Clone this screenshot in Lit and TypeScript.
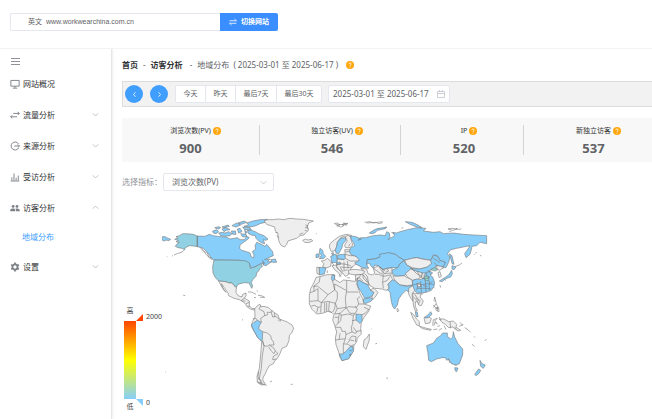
import { LitElement, html, svg, css } from "lit";
import { customElement } from "lit/decorators.js";

/* ---------- icons ---------- */

const icons = {
  monitor: svg`<path d="M1.2 2h11.6v8H1.2zM7 10v2.4M4 12.8h6"/>`,
  swap: svg`<path d="M1 9.5h9M3.2 7.3 1 9.5l2.2 2.2M4.500 4.800H13M10.800 2.600 13 4.800 10.800 7"/>`,
  source: svg`<path d="M12 4.200A5.600 5.600 0 1 0 12 9.800M6 7h7.200M11 4.800 13.200 7 11 9.200"/>`,
  bars: svg`<path d="M1 12.600h12M2.600 12V7.500M5.600 12V2M8.600 12V8M11.600 12V5"/>`,
  people: svg`<g fill="currentColor" stroke="none"><circle cx="4.4" cy="4.8" r="2"/><circle cx="9.8" cy="4.8" r="2"/><path d="M.4 11.6V9.8C.4 8.2 3 7.6 4.4 7.6s3 .5 3 2.2v1.8zM8.4 11.6V9.4c0-.8-.3-1.3-.8-1.7 2.4-.4 6 .2 6 2.1v1.8z"/></g>`,
  gear: svg`<circle cx="7" cy="7" r="3.6" stroke-width="2.6"/><path stroke-width="2.4" d="M7 .8v2M7 11.2v2M1.6 3.9l1.8 1M10.6 9.1l1.8 1M1.6 10.1l1.8-1M10.6 4.9l1.8-1"/>`,
};

type IconName = keyof typeof icons;

/* ---------- map data, three units to a pixel ---------- */

const PLAIN = "#eeeeee";
const BLUE = "#87cefa";
const TEAL = "#90d1e4";
const GREEN = "#90d2c8";

interface Shape {
  fill: string;
  d: string;
}
interface Sheet {
  dx: number;
  dy: number;
  shapes: Shape[];
}

const s = (fill: string, d: string): Shape => ({ fill, d });

const sheets: Sheet[] = [
  {
    dx: 0,
    dy: 0,
    shapes: [
      s(BLUE, "M37 95 45 95 52 99 62 103 56 107 48 105 44 108 37 106Z"),
      s(TEAL, "M142 93 130 88 110 86 98 86 88 92 78 95 84 99 74 103 86 106 78 110 88 113 80 118 76 124 84 128 96 130 104 134 106 128 118 122 130 123 142 125Z"),
      s("none", "M104 134 96 141 82 146 72 150M66 153 69 152M50 154 52 155M101 270 104 272 103 273Z"),
      s(BLUE, "M142 93 165 94 178 88 190 92 210 95 228 96 240 102 262 98 270 104 283 104 290 94 298 98 292 104 283 110 270 120 269 130 275 136 290 140 300 144 304 156 311 158 312 150 307 140 317 132 315 122 320 112 334 118 345 124 350 118 360 130 368 140 370 152 356 158 344 164 360 162 352 170 366 170 356 176 348 182 340 180 342 174 330 178 318 184 304 190 300 182 298 176 288 172 270 166 192 165 186 162 178 150 168 138 160 130 150 127 142 125Z"),
      s("none", "M150 127 158 136 164 142 168 148 178 158 186 164M156 130 162 140 170 143M172 144 176 156 184 158M142 93V125M338 170 346 176M340 180 338 166"),
      s(TEAL, "M192 165 270 166 288 168 298 174 301 190 318 184 332 176 338 184 330 190 326 198 320 204 318 214 308 224 304 232 308 244 305 250 300 240 298 234 284 233 270 236 262 240 259 248 252 242 246 234 238 234 226 230 206 228 196 218 189 204 188 186Z"),
      s(BLUE, "M292 76 304 76 316 80 326 86 342 92 354 102 348 106 340 104 344 116 336 114 326 108 318 100 316 92 304 90 296 86Z"),
      s(BLUE, "M206 84 216 82 226 84 236 80 246 86 240 92 226 94 212 92Z"),
      s(BLUE, "M188 78 200 74 206 80 198 86 190 84Z"),
      s(BLUE, "M290 54 308 48 330 44 352 43 346 52 330 56 318 62 300 66 282 64 296 60Z"),
      s(BLUE, "M194 68 206 65 212 68 204 72ZM216 72 228 68 240 74 228 76 222 80ZM246 62 260 54 272 60 258 66ZM262 72 270 70 276 80 266 84ZM278 66 300 68 304 74 284 74ZM244 78 256 78 258 88 248 88ZM272 86 288 88 290 94 278 96ZM216 66 234 60 238 64 224 68ZM264 54 282 48 290 52 274 58ZM284 76 292 82 286 86Z"),
      s(BLUE, "M362 164 376 162 380 172 368 172Z"),
      s(PLAIN, "M342 48 352 44 368 44 385 42 400 44 420 40 440 42 460 43 490 48 476 54 472 66 476 76 466 84 462 90 450 92 440 100 426 104 414 108 410 118 404 126 394 122 388 112 384 98 384 86 376 78 374 66 362 62 350 58Z"),
      s("none", "M466 60 474 62 466 68 476 70M464 76 472 78M448 88 460 84M376 82 384 84M380 92 388 98"),
      s(PLAIN, "M458 106 466 102 474 105 484 103 488 108 476 113 464 112Z"),
      s(PLAIN, "M206 228 226 230 238 234 246 234 252 242 259 248 258 262 264 272 276 276 278 268 288 264 288 272 284 278 278 290 268 284 252 280 236 272 234 264 224 250 214 236 218 248 228 262 222 256 212 240Z"),
      s(PLAIN, "M274 286 284 280 298 288 298 302 305 310 314 311 313 315 303 313 292 306 285 295Z"),
      s("none", "M278 288 286 288M288 296 298 292M292 304 300 304M294 261 304 261 318 268M324 271 334 272 344 277 330 277M312 277 318 278M320 256 324 260M276 344 279 345M45 500 47 501M499 86 501 86"),
      s(BLUE, "M510 130 518 136 520 146 527 154 522 160 508 161 514 151 508 142Z"),
      s(BLUE, "M498 148 508 146 507 156 498 158Z"),
      s(PLAIN, "M314 312 322 302 330 298 333 305 342 304 356 308 362 314 372 322 384 330 388 342 398 346 410 350 426 360 431 370 426 382 418 392 417 406 410 424 396 430 390 446 382 460 374 468 370 476 358 482 350 496 346 506 340 516 338 524 346 538 334 540 322 532 321 514 328 490 332 450 335 410 322 396 312 378 304 364 307 350 315 336Z"),
      s(BLUE, "M304 360 312 352 322 346 334 352 328 362 326 372 338 380 337 404 334 408 322 396 312 378Z"),
      s("none", "M332 302 327 312 342 320 344 332 332 340 334 352M344 332 352 330 352 322 364 322 366 316M364 322 368 336 378 334 386 342M374 324V336M308 342 318 340 322 346M338 380 352 384 362 392 364 402 370 410 372 420 358 420 352 424 342 422 338 406M358 420 372 430 376 438 372 446 364 438 356 426M376 438 384 446 370 454 368 464 380 462M337 408 342 424 337 450 334 490 328 520 334 536M326 500 324 516 330 524M322 530 338 538 350 541M324 520 336 530M326 534 340 534M384 346 392 344 390 350M360 531 366 528M422 538 428 538"),
    ],
  },
  {
    dx: 510,
    dy: 0,
    shapes: [
      s(PLAIN, "M28 126 30 116 44 104 58 94 78 88 94 91 90 98 74 94 62 98 52 112 50 126 46 136 34 140Z"),
      s(BLUE, "M50 124 52 112 62 100 76 98 78 106 68 118 66 128 62 136 56 146 48 144 46 134Z"),
      s(PLAIN, "M76 96 84 90 92 98 98 120 90 128 76 128 74 120 82 108Z"),
      s(PLAIN, "M4 168 14 166 22 160 34 170 32 184 18 189 8 186 12 176Z"),
      s(BLUE, "M-3 187 18 189 13 207-2 210Z"),
      s(PLAIN, "M-10 187-3 187-2 208-9 206Z"),
      s(PLAIN, "M76 148 74 134 90 134 98 142 106 154 124 160 124 172 104 180 96 186 90 196 84 210 76 214 68 204 56 192 50 184 50 172 52 162 72 164Z"),
      s(BLUE, "M32 154 48 147 52 162 50 172 36 173ZM52 150 74 147 76 160 72 164 52 160ZM50 174 60 171 62 178 50 178ZM34 146 40 142 40 150Z"),
      s(PLAIN, "M36 182 50 180 50 188 62 200 66 206 60 212 56 204 44 194Z"),
      s(PLAIN, "M84 196 102 193 122 195 134 198 134 207 110 210 88 207Z"),
      s("none", "M76 140H98M76 148 90 152 104 152M76 160 90 168 120 168M50 180 62 176 78 178 92 182M64 186 82 188 98 186M70 198 82 194M72 170V196M82 168 84 190M60 184 68 200M22 204 22 196M56 213 64 214M82 218 90 219M34 172 42 180M90 116 86 124"),
      s(BLUE, "M88 140 92 128 104 122 100 112 94 104 92 92 110 96 124 102 114 106 122 98 136 98 160 92 180 90 196 92 200 80 208 84 210 98 204 104 214 98 224 92 218 82 230 84 240 80 262 74 290 68 318 70 310 78 340 82 360 80 370 86 400 84 430 88 460 90 500 92 500 116 480 112 470 122 456 124 454 134 450 148 438 158 434 146 444 132 450 122 430 126 410 130 392 134 382 146 390 156 386 172 378 188 368 186 376 172 360 166 352 152 340 150 332 166 310 162 290 158 276 160 254 166 236 156 226 148 206 144 188 150 180 156 164 162 142 164 140 178 146 190 128 188 112 180 104 174 118 166 108 154 94 150Z"),
      s(BLUE, "M142 164 164 162 180 156 178 148 206 143 226 148 236 156 254 166 246 172 238 178 234 188 216 188 200 190 188 194 176 182 164 180 160 190 152 182 148 174 140 178Z"),
      s(PLAIN, "M160 190 176 182 188 194 216 188 216 204 212 210 218 224 204 238 208 250 200 256 186 252 164 250 150 242 138 224 128 208 134 200 122 190 140 192 144 206 158 210 164 204Z"),
      s("none", "M160 190 180 204 190 208M188 194 192 206 214 204M164 208 176 208 190 214 212 210M190 208 188 232 190 250M188 232 202 226 210 214M134 206 142 214 146 236M176 184 190 204M200 190 206 198 196 202M180 186 196 198"),
      s(PLAIN, "M106 210 128 208 138 220 148 240 132 234 118 226 108 234Z"),
      s("none", "M106 224 118 218 122 208M118 218 128 228M128 208 130 220 142 232"),
      s(BLUE, "M110 230 118 226 132 234 144 240 150 254 162 262 158 272 146 278 134 280 124 262 114 246Z"),
      s(BLUE, "M130 282 150 278 158 280 154 288 136 296 130 291Z"),
      s(PLAIN, "M150 254 162 250 166 254 174 262 166 276 158 284 156 274 162 262Z"),
      s(PLAIN, "M254 166 276 160 290 158 310 163 332 166 336 176 322 186 300 192 276 188 260 180Z"),
      s(BLUE, "M216 196 234 187 240 176 252 167 260 180 274 188 272 194 264 204 252 212 230 214 218 208Z"),
      s(PLAIN, "M218 212 230 214 252 212 258 216 276 224 278 240 262 242 240 240 226 228Z"),
      s(PLAIN, "M256 206 272 192 292 198 300 206 300 218 292 224 278 226 262 216Z"),
      s(BLUE, "M272 190 300 192 322 186 334 176 332 166 342 150 352 154 360 166 376 172 372 182 362 186 350 180 344 190 330 196 320 204 306 204 292 200Z"),
      s(PLAIN, "M348 182 362 184 372 188 358 196 350 191Z"),
      s(GREEN, "M332 193 344 188 354 193 346 198 338 196Z"),
      s(PLAIN, "M354 202 360 200 364 214 358 218 355 210Z"),
      s(BLUE, "M278 226 290 222 304 224 314 216 314 206 330 198 338 204 330 210 338 216 344 232 342 244 334 256 318 262 304 264 292 264 282 256 278 244Z"),
      s(GREEN, "M314 214 326 213 326 228 314 226Z"),
      s(PLAIN, "M292 198 306 204 304 218 298 212ZM290 236 300 234 304 244 294 246Z"),
      s("none", "M280 240 292 236 304 240 318 236 342 238M292 250 306 250 322 250 334 252M302 228 304 262M316 228 318 262M328 228 328 256M300 218 316 222 330 216M308 204 310 222M320 204V214M324 196 334 208M342 172 350 180M340 160 360 172M274 190 290 206 306 214M330 236 338 228M294 236 290 256M310 242 322 244"),
      s(BLUE, "M208 250 204 238 218 224 226 228 240 240 262 244 278 240 270 250 268 262 258 256 246 268 236 282 232 300 224 312 218 304 214 290 210 262 202 254Z"),
      s(PLAIN, "M266 250 278 242 284 256 276 268 280 290 274 282 266 268Z"),
      s(PLAIN, "M278 264 292 266 304 266 300 276 310 288 304 302 296 300 292 290 286 290 286 304 292 318 286 318 280 300Z"),
      s("none", "M284 268 292 280 302 288M288 278 298 290 296 298M280 276 294 290M232 310 236 316 233 321 231 316ZM304 268 310 266M340 246 344 250M344 276 348 292 342 286ZM348 294 352 304M340 300 350 312 354 304M346 314 356 308 357 320 348 316"),
      s(BLUE, "M396 182 408 186 402 194 396 192ZM395 196 397 206 392 216 376 222 366 230 358 228 374 218 386 210Z"),
      s(BLUE, "M388 146 396 152 402 178 396 176 392 160Z"),
      s("none", "M406 184 418 180 426 174M372 222 378 226M360 240 362 248M462 150 464 148M480 152 484 152M466 144 470 142"),
      s(BLUE, "M156 86 148 84 160 76 174 70 200 67 196 71 172 76 164 84ZM256 50 276 52 294 60 306 68 290 66 270 58Z"),
      s("none", "M42 56 52 54 60 60 50 62 62 66 72 62 66 58 84 56 70 54 80 60 56 58 46 58M134 52 150 50 160 54 172 52 188 50M140 54 168 52 176 56 188 53M196 66 200 66M384 72 396 70 412 72 398 76ZM388 80 394 78M408 70 416 73 424 72M244 70 250 68M214 82 222 86"),
      s(BLUE, "M34 210 42 209 42 222 46 226 40 230 36 222Z"),
    ],
  },
  {
    dx: 450,
    dy: 75,
    shapes: [
      s(PLAIN, "M48 142 60 140 80 134 94 134 104 135 104 148 120 158 130 150 150 152 164 154 170 152 174 142 170 162 180 190 188 206 192 222 212 228 206 244 192 262 184 276 182 296 184 312 172 324 170 336 162 346 160 362 146 386 126 392 120 382 116 366 108 344 106 324 110 306 104 286 98 270 102 254 96 248 84 244 66 250 50 252 36 238 28 222 28 196 32 176 42 158Z"),
      s(BLUE, "M96 136 104 135 103 148 98 154 94 146Z"),
      s(BLUE, "M168 252 186 254 186 274 180 280 168 270Z"),
      s(BLUE, "M118 372 128 372 138 364 150 350 158 349 160 364 146 386 126 392Z"),
      s("none", "M148 374 152 372 151 378ZM40 170 52 168 84 194 104 180M60 140 58 156 42 168 42 184 30 188M42 184 54 176 54 212 30 214M98 154 104 180 104 162 140 182 140 152M140 186H174M104 180 112 186 112 206 106 220 84 214 64 218 84 194M140 182 136 206 138 232 112 236 106 220M54 212 64 218 62 248M34 228 44 226 54 232 50 248M54 232 62 230M74 218V246M80 218V244M88 216 86 242 96 248M106 220 104 236 98 246M112 236 104 252 120 250 138 234 146 230 170 232 176 222 172 206 180 200M138 232 150 250 166 250 172 238 166 228M120 250 124 256 144 252 158 256 166 252M186 254 196 250 206 238 192 232M176 222 192 222M104 262 116 262 118 250M124 254 122 272 106 288M116 262 114 280M106 292 122 292 126 304 136 304 138 314 146 310 156 306 154 292 158 280 160 256M156 272 168 270M160 292 168 304 184 302M156 306 168 310 172 304M138 314 136 326 106 330M136 326 130 344 130 370M130 342 142 342 152 348 162 344M146 330 156 318 168 320 166 336M142 340 150 330 162 332M120 310 118 328M148 362 156 362"),
      s(PLAIN, "M192 330 200 324 208 312 208 330 198 358 190 350Z"),
      s("none", "M228 340 231 341M262 444 264 445M214 296 216 298"),
    ],
  },
  {
    dx: 510,
    dy: 270,
    shapes: [
      s(BLUE, "M286 50 292 52 294 66 288 64Z"),
      s(PLAIN, "M272 52 280 58 290 72 298 80 298 92 290 90 280 72Z"),
      s(PLAIN, "M298 94 310 97 320 100 334 103 332 106 308 101Z"),
      s(PLAIN, "M312 68 326 66 334 70 330 84 316 86Z"),
      s(BLUE, "M314 66 324 60 332 50 336 58 324 68 316 69Z"),
      s(PLAIN, "M358 72 372 72 386 80 400 78 410 88 408 96 422 106 414 108 398 96 386 98 376 88 366 82Z"),
      s("none", "M338 92 340 74 352 70 344 78 352 86 344 82 342 92M358 66 362 76M340 104 352 102M356 106 366 100M372 92 378 104M390 80 392 100M404 96 410 104M418 94 430 88M420 82 428 92M434 98 444 104 452 112M462 124 466 128M456 148 464 154M494 138 500 132M352 94 360 92M340 38 348 26M346 40 354 36 352 48"),
      s(BLUE, "M320 152 340 144 350 130 362 122 368 114 382 114 382 124 392 132 398 126 400 110 404 126 414 146 428 162 428 180 418 206 408 210 394 206 386 192 380 196 376 188 366 188 350 192 334 200 326 196 324 176Z"),
      s(BLUE, "M404 218 414 219 410 230 406 228Z"),
      s(BLUE, "M480 196 486 206 496 210 490 220 482 214ZM476 222 482 226 478 234 468 242 464 238Z"),
      s("none", "M384 190 390 204M404 210 410 212M199 249 203 250M166 146 168 147"),
    ],
  },
];

/* ---------- shared ---------- */

const base = css`
  :host {
    display: block;
    font-family: "Noto Sans", "Noto Sans CJK SC", sans-serif;
    font-size: 8px;
    line-height: 12px;
    color: #606266;
  }
  * {
    box-sizing: border-box;
  }
  button,
  input,
  select {
    font: inherit;
    color: inherit;
    margin: 0;
    padding: 0;
    border: 0;
    background: none;
    outline: none;
  }
  a {
    color: inherit;
    text-decoration: none;
  }
  svg {
    display: block;
    flex: none;
  }
`;

const chevron = (d: string) => html`<svg width="7" height="7" viewBox="0 0 14 14" fill="none" stroke="currentColor" stroke-width="1.6" aria-hidden="true"><path d=${d} /></svg>`;
const DOWN = "M1.5 4.5 7 10l5.5-5.5";
const UP = "M1.5 9.5 7 4l5.5 5.5";

@customElement("help-dot")
class HelpDot extends LitElement {
  static styles = css`
    :host {
      display: block;
      flex: none;
    }
    svg {
      display: block;
    }
  `;
  render() {
    return html`<svg width="8" height="8" viewBox="0 0 16 16" aria-hidden="true">
      <circle cx="8" cy="8" r="8" fill="#ffa60d" />
      <path d="M5.6 6.2c0-3 4.8-3 4.8-.2 0 1.8-2.4 1.9-2.4 3.7" fill="none" stroke="#fff" stroke-width="1.5" />
      <circle cx="8" cy="12" r="1" fill="#fff" />
    </svg>`;
  }
}

/* ---------- header ---------- */

@customElement("site-bar")
class SiteBar extends LitElement {
  static styles = [
    base,
    css`
      .bar {
        display: flex;
        padding: 13px 10px 17px;
        border-bottom: 1px solid #f4f4f5;
      }
      .site {
        display: flex;
        align-items: center;
        gap: 4px;
        width: 210px;
        height: 18px;
        padding-left: 17px;
        border: 1px solid #e4e7ed;
        border-right: 0;
        border-radius: 2px 0 0 2px;
        font-size: 7px;
      }
      .site input {
        flex: 1;
        min-width: 0;
        font-family: "Liberation Sans", sans-serif;
      }
      .switch {
        display: flex;
        align-items: center;
        justify-content: center;
        gap: 4px;
        width: 58px;
        height: 18px;
        border-radius: 0 2px 2px 0;
        background: #3a8eff;
        color: #fff;
        font-size: 7px;
        font-weight: 700;
      }
    `,
  ];
  render() {
    return html`<header class="bar">
      <label class="site"><span>英文</span><input type="text" value="www.workwearchina.com.cn" /></label>
      <button class="switch">
        <svg width="8" height="8" viewBox="0 0 16 16" fill="none" stroke="currentColor" stroke-width="1.6" aria-hidden="true"><path d="M1 5.5h14l-4-3.500M15 10.500H1l4 3.500" /></svg>
        切换网站
      </button>
    </header>`;
  }
}

/* ---------- sidebar ---------- */

interface MenuItem {
  icon: IconName;
  label: string;
  fold?: "open" | "closed";
  children?: string[];
}

const menu: MenuItem[] = [
  { icon: "monitor", label: "网站概况" },
  { icon: "swap", label: "流量分析", fold: "closed" },
  { icon: "source", label: "来源分析", fold: "closed" },
  { icon: "bars", label: "受访分析", fold: "closed" },
  { icon: "people", label: "访客分析", fold: "open", children: ["地域分布"] },
  { icon: "gear", label: "设置", fold: "closed" },
];

@customElement("side-menu")
class SideMenu extends LitElement {
  static styles = [
    base,
    css`
      nav {
        padding: 8px 0 0 10px;
        color: #303133;
      }
      .burger {
        display: block;
        margin-bottom: 2px;
        padding: 0 1px;
        color: #909399;
      }
      .item {
        display: flex;
        align-items: center;
        gap: 3px;
        width: 100%;
        height: 31px;
        padding-right: 12px;
        text-align: left;
      }
      .item svg {
        color: #7d8087;
      }
      .item .fold {
        margin-left: auto;
      }
      .item .fold svg {
        color: #b4b7be;
      }
      .child {
        display: flex;
        align-items: center;
        height: 28px;
        padding-left: 12px;
        color: #409eff;
      }
    `,
  ];
  render() {
    return html`<nav>
      <button class="burger" aria-label="菜单">
        <svg width="9" height="9" viewBox="0 0 9 9" stroke="currentColor" aria-hidden="true"><path d="M0 1.5h9M0 4.5h9M0 7.5h9" /></svg>
      </button>
      ${menu.map((m) => {
        const body = html`<svg width="10" height="10" viewBox="0 0 14 14" fill="none" stroke="currentColor" stroke-width="1.3" aria-hidden="true">${icons[m.icon]}</svg><span>${m.label}</span>`;
        return html`${m.fold
          ? html`<button class="item" aria-expanded=${m.fold === "open"}>${body}<span class="fold">${chevron(m.fold === "open" ? UP : DOWN)}</span></button>`
          : html`<a class="item" href="#">${body}</a>`}
        ${m.children?.map((c) => html`<a class="child" href="#">${c}</a>`)}`;
      })}
    </nav>`;
  }
}

/* ---------- map ---------- */

@customElement("world-map")
class WorldMap extends LitElement {
  static styles = [
    base,
    css`
      .chart {
        display: flex;
        align-items: flex-start;
        padding-left: 2px;
      }
      .legend {
        display: grid;
        flex: 0 0 38px;
        grid-template-columns: 12px 26px;
        grid-template-rows: 16px 78px 16px;
        margin-top: 100px;
        font-size: 7px;
        line-height: 12px;
        color: #444;
      }
      .end {
        text-align: center;
      }
      .low {
        grid-row: 3;
        align-self: center;
      }
      .ramp {
        grid-row: 2;
        background: linear-gradient(#ff4500, #ff0 50%, #87cefa);
      }
      .ticks {
        grid-row: 1 / 4;
        grid-column: 2;
        display: flex;
        flex-direction: column;
        justify-content: space-between;
        padding: 8px 0;
      }
      .tick {
        display: flex;
        align-items: center;
        gap: 3px;
        height: 8px;
      }
      .map {
        flex: 0 0 350px;
      }
      .map svg {
        width: 100%;
        height: auto;
      }
    `,
  ];
  render() {
    return html`<div class="chart">
      <div class="legend">
        <span class="end">高</span>
        <span class="ramp"></span>
        <span class="end low">低</span>
        <div class="ticks">
          <span class="tick"><svg width="7" height="8" viewBox="0 0 7 8" aria-hidden="true"><path d="M0 8 7 1V8Z" fill="#ff4500" /></svg>2000</span>
          <span class="tick"><svg width="7" height="8" viewBox="0 0 7 8" aria-hidden="true"><path d="M0 0H7V7Z" fill="#87cefa" /></svg>0</span>
        </div>
      </div>
      <div class="map">
        <svg viewBox="36 0 1050 570" stroke="#777" stroke-width="1.8" stroke-linejoin="round" role="img" aria-label="地域分布">
          ${sheets.map((g) => svg`<g transform="translate(${g.dx} ${g.dy})">${g.shapes.map((p) => svg`<path d=${p.d} fill=${p.fill} />`)}</g>`)}
        </svg>
      </div>
    </div>`;
  }
}

/* ---------- report ---------- */

const stats = [
  { label: "浏览次数(PV)", value: 900 },
  { label: "独立访客(UV)", value: 546 },
  { label: "IP", value: 520 },
  { label: "新独立访客", value: 537 },
];

@customElement("region-report")
class RegionReport extends LitElement {
  static styles = [
    base,
    css`
      :host {
        overflow: hidden;
      }
      .page {
        padding: 10px 0 0 10px;
      }
      .crumbs {
        display: flex;
        align-items: center;
        gap: 5px;
      }
      .crumbs a {
        font-weight: 700;
        color: #303133;
      }
      .crumbs .now {
        display: flex;
        align-items: center;
        gap: 8px;
      }
      .tools {
        display: flex;
        align-items: center;
        height: 26px;
        margin-top: 10px;
        padding: 0 2px;
        border: 1px solid #dcdcdc;
        border-right: 0;
        background: #f2f2f2;
      }
      .round {
        display: flex;
        align-items: center;
        justify-content: center;
        width: 18px;
        height: 18px;
        margin-right: 7px;
        border-radius: 50%;
        background: #409eff;
        color: #fff;
      }
      .range {
        display: flex;
        width: 147px;
        height: 18px;
        margin-right: 6px;
        border: 1px solid #e4e7ed;
        border-radius: 2px;
        background: #fff;
        font-size: 7px;
      }
      .range button {
        flex: auto;
        padding: 0 7px;
        white-space: nowrap;
      }
      .range button + button {
        border-left: 1px solid #e4e7ed;
      }
      .date {
        display: flex;
        align-items: center;
        width: 122px;
        height: 18px;
        padding: 0 4px;
        border: 1px solid #e4e7ed;
        border-radius: 2px;
        background: #fff;
      }
      .date input {
        flex: 1;
        min-width: 0;
      }
      .date svg {
        color: #c0c4cc;
      }
      .stats {
        display: grid;
        grid-template-columns: 137fr 141fr 123fr 136fr;
        align-items: center;
        height: 44px;
        margin: 11px -7px 0 0;
        background: #f8f8f8;
      }
      .stat {
        display: flex;
        flex-direction: column;
        align-items: center;
        height: 30px;
      }
      .stat + .stat {
        padding-left: 4px;
        border-left: 1px solid #d4d4d4;
      }
      .name {
        display: flex;
        align-items: center;
        gap: 2px;
        margin-right: -10px;
        font-size: 7px;
        color: #303133;
      }
      .value {
        font-size: 13px;
        line-height: 22px;
        font-weight: 700;
      }
      .pick {
        display: flex;
        align-items: center;
        gap: 1px;
        margin: 11px 0 14px;
        color: #909399;
      }
      .select {
        display: flex;
        align-items: center;
        width: 111px;
        height: 18px;
        padding-right: 6px;
        border: 1px solid #e4e7ed;
        border-radius: 2px;
      }
      .select select {
        appearance: none;
        flex: 1;
        height: 16px;
        padding-left: 8px;
        color: #606266;
      }
      .select svg {
        color: #c0c4cc;
      }
    `,
  ];
  render() {
    return html`<main class="page">
      <div class="crumbs">
        <a href="#">首页</a><span>-</span><a href="#">访客分析</a><span>&nbsp;-</span>
        <span class="now">地域分布 &nbsp;( 2025-03-01 至 2025-06-17 )<help-dot></help-dot></span>
      </div>
      <div class="tools">
        <button class="round" aria-label="上一段">${chevron("M9 2.5 5 7l4 4.5")}</button>
        <button class="round" aria-label="下一段">${chevron("M5 2.5 9 7l-4 4.5")}</button>
        <div class="range">${["今天", "昨天", "最后7天", "最后30天"].map((t) => html`<button>${t}</button>`)}</div>
        <label class="date">
          <input type="text" aria-label="日期" value="2025-03-01 至 2025-06-17" />
          <svg width="8" height="8" viewBox="0 0 8 8" fill="none" stroke="currentColor" aria-hidden="true"><path d="M.5 1.5h7v6h-7zM.5 3.5h7M2.5 0v2M5.5 0v2" stroke-width=".8" /></svg>
        </label>
      </div>
      <section class="stats">
        ${stats.map((x) => html`<div class="stat"><span class="name">${x.label}<help-dot></help-dot></span><span class="value">${x.value}</span></div>`)}
      </section>
      <div class="pick">
        <label for="metric">选择指标：</label>
        <div class="select">
          <select id="metric">
            <option>浏览次数(PV)</option>
            <option>独立访客(UV)</option>
          </select>
          ${chevron(DOWN)}
        </div>
      </div>
      <world-map></world-map>
    </main>`;
  }
}

@customElement("app-root")
class AppRoot extends LitElement {
  static styles = [
    base,
    css`
      :host {
        min-height: 100vh;
        background: #fff;
        overflow: hidden;
      }
      .body {
        display: grid;
        grid-template-columns: 112px minmax(0, 1fr);
        min-height: calc(100vh - 49px);
      }
      side-menu {
        border-right: 1px solid #e6e6e6;
        box-shadow: 1px 0 2px #eee;
      }
    `,
  ];
  render() {
    return html`<site-bar></site-bar>
      <div class="body">
        <side-menu></side-menu>
        <region-report></region-report>
      </div>`;
  }
}
